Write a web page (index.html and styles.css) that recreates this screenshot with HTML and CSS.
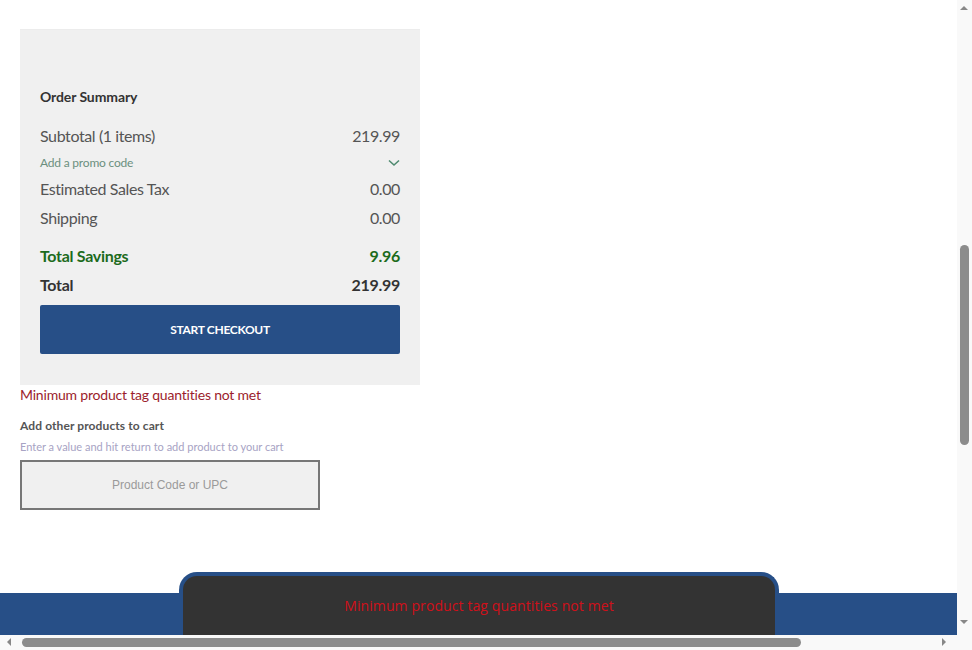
FILE: index.html
```html
<!DOCTYPE html>
<html>
<head>
<meta charset="utf-8">
<link rel="stylesheet" href="styles.css">
</head>
<body>
<div class="page">
  <main class="content">
    <section class="summary">
      <h2 class="summary-title">Order Summary</h2>
      <div class="row row-main"><span>Subtotal (1 items)</span><span>219.99</span></div>
      <div class="row row-promo"><span>Add a promo code</span>
        <svg class="chev" width="12" height="8" viewBox="0 0 12 8"><path d="M1 1.5 L6 6 L11 1.5" fill="none" stroke="#4f8a70" stroke-width="1.6"/></svg>
      </div>
      <div class="row row-main row-tax"><span>Estimated Sales Tax</span><span>0.00</span></div>
      <div class="row row-main"><span>Shipping</span><span>0.00</span></div>
      <div class="row row-savings"><span>Total Savings</span><span>9.96</span></div>
      <div class="row row-total"><span>Total</span><span>219.99</span></div>
      <button class="checkout">START CHECKOUT</button>
    </section>
    <p class="error">Minimum product tag quantities not met</p>
    <div class="add">
      <div class="add-title">Add other products to cart</div>
      <div class="add-hint">Enter a value and hit return to add product to your cart</div>
      <input class="add-input" type="text" placeholder="Product Code or UPC">
    </div>
  </main>
  <footer class="footer-bar"></footer>
</div>
<div class="toast"><span>Minimum product tag quantities not met</span></div>
<div class="vscroll">
  <span class="arrow arrow-up"></span>
  <span class="vthumb"></span>
  <span class="arrow arrow-down"></span>
</div>
<div class="hscroll">
  <span class="arrow arrow-left"></span>
  <span class="hthumb"></span>
  <span class="arrow arrow-right"></span>
</div>
</body>
</html>
```
FILE: styles.css
```css
html, body {
  margin: 0;
  padding: 0;
  background: #fff;
  overflow: hidden;
}
body {
  font-family: "Lato", "Open Sans", sans-serif;
  width: 972px;
  height: 650px;
}
.page {
  width: 957px;
  height: 635px;
  display: flex;
  flex-direction: column;
}
.content {
  flex: 1;
  padding: 29px 20px 0;
}
.summary {
  width: 360px;
  background: #f0f0f0;
  padding: 57px 20px 31px;
  border-top: 1px solid #ececec;
}
.summary-title {
  margin: 0 0 14px;
  font-size: 14px;
  font-weight: 700;
  color: #333;
  line-height: 20px;
  letter-spacing: -0.1px;
}
.row {
  display: flex;
  justify-content: space-between;
  align-items: center;
}
.row-main {
  font-size: 16px;
  color: #555;
  line-height: 29px;
  letter-spacing: -0.4px;
}
.row-promo {
  font-size: 12px;
  color: #6b8f7e;
  line-height: 16px;
  margin-top: 5px;
  letter-spacing: -0.2px;
}
.row-tax { margin-top: 3px; }
.row-savings {
  font-size: 16px;
  font-weight: 700;
  color: #1c6b1c;
  line-height: 29px;
  margin-top: 9px;
  letter-spacing: -0.3px;
}
.row-total {
  font-size: 16px;
  font-weight: 700;
  color: #333;
  line-height: 29px;
  letter-spacing: -0.3px;
}
.checkout {
  display: block;
  width: 360px;
  height: 49px;
  margin-top: 6px;
  border: none;
  border-radius: 2px;
  background: #274f87;
  color: #fff;
  font-family: inherit;
  font-weight: 700;
  font-size: 12px;
  letter-spacing: -0.3px;
}
.error {
  margin: 1px 0 0;
  font-size: 14px;
  line-height: 18px;
  color: #9b1c2c;
  letter-spacing: -0.2px;
}
.add { margin-top: 14px; }
.add-title {
  font-size: 12px;
  font-weight: 700;
  color: #555;
  line-height: 16px;
  letter-spacing: 0.1px;
}
.add-hint {
  font-size: 11px;
  color: #a7a3c4;
  line-height: 16px;
  margin-top: 5px;
}
.add-input {
  display: block;
  box-sizing: border-box;
  width: 300px;
  height: 50px;
  margin-top: 5px;
  border: 2px solid #777;
  background: #f0f0f0;
  text-align: center;
  font-family: "Liberation Sans", Arial, sans-serif;
  font-size: 12px;
  outline: none;
}
.add-input::placeholder { color: #9a9a9a; }
.footer-bar {
  height: 42px;
  background: #274f87;
}
.toast {
  position: fixed;
  left: 179px;
  top: 572px;
  width: 600px;
  height: 63px;
  box-sizing: border-box;
  background: #333;
  border: 4px solid #274f87;
  border-bottom: none;
  border-radius: 18px 18px 0 0;
  display: flex;
  justify-content: center;
  padding-top: 20px;
  font-family: "Open Sans", sans-serif;
  font-size: 14px;
  color: #d0101a;
  letter-spacing: 0.1px;
}
.vscroll {
  position: fixed;
  right: 0;
  top: 0;
  width: 15px;
  height: 635px;
  background: #f9f9f9;
}
.vthumb {
  position: absolute;
  left: 3px;
  top: 245px;
  width: 9px;
  height: 200px;
  border-radius: 5px;
  background: #8c8c8c;
}
.hscroll {
  position: fixed;
  left: 0;
  bottom: 0;
  width: 972px;
  height: 15px;
  background: #f9f9f9;
}
.hthumb {
  position: absolute;
  left: 22px;
  top: 3px;
  width: 779px;
  height: 9px;
  border-radius: 5px;
  background: #8c8c8c;
}
.arrow {
  position: absolute;
  width: 0;
  height: 0;
  border: 4px solid transparent;
}
.arrow-up { left: 3px; top: 6px; border-bottom: 4px solid #888; border-top-width: 0; }
.arrow-down { left: 3px; top: 620px; border-top: 4px solid #888; border-bottom-width: 0; }
.arrow-left { left: 7px; top: 3px; border-right: 4px solid #888; border-left-width: 0; }
.arrow-right { left: 942px; top: 3px; border-left: 4px solid #888; border-right-width: 0; }
```
